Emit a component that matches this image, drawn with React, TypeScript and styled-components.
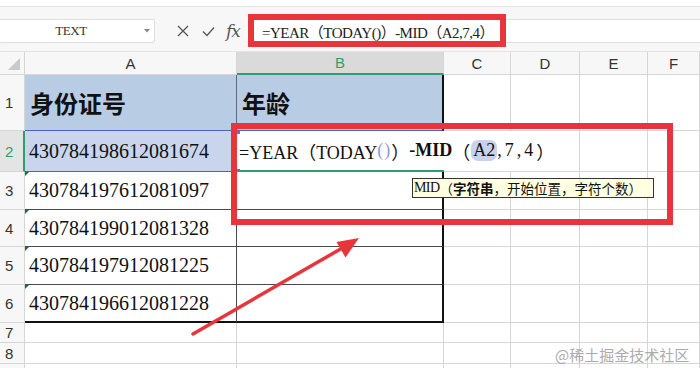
import React from "react";
import styled, { createGlobalStyle, css } from "styled-components";

const Global = createGlobalStyle`
  html, body { margin: 0; padding: 0; background: #fff; }
  body { width: 700px; height: 368px; overflow: hidden; }
  * { box-sizing: border-box; }
`;

const GREEN = "#2f9e6c";
const RED = "#e8353b";
const GRID = "#d6d6d6";
const DARK = "#4a4a4a";
const SERIF = `"Liberation Serif", "Noto Sans CJK SC", serif`;
const SANS = `"Liberation Sans", Arial, sans-serif`;
const CJK = `"Noto Sans CJK SC", "Liberation Sans", sans-serif`;

const Root = styled.div`
  position: relative;
  width: 700px;
  height: 368px;
  overflow: hidden;
  background: #fff;
`;

const TopStrip = styled.div`
  height: 7px;
  background: #fff;
  border-bottom: 1px solid #e4e4e4;
`;

const Toolbar = styled.div`
  height: 45px;
  display: flex;
  align-items: flex-start;
  padding-top: 12px;
  background: #f7f7f7;
  border-bottom: 1px solid #e2e2e2;
`;

const NameBox = styled.div`
  width: 156px;
  height: 24px;
  margin-left: -1px;
  display: flex;
  align-items: center;
  background: #fff;
  border: 1px solid #dedede;
  border-radius: 2px;
  font-family: ${SERIF};
  font-size: 13px;
  letter-spacing: -0.4px;
  color: #333;
`;

const NameText = styled.span`
  flex: 1;
  text-align: center;
  padding-left: 2px;
`;

const Caret = styled.span`
  width: 14px;
  display: flex;
  justify-content: center;
`;

const IconGroup = styled.div`
  width: 92px;
  height: 24px;
  display: flex;
  align-items: center;
  padding-left: 22px;
  gap: 13px;
  color: #555;
`;

const FxLabel = styled.span`
  font-family: "DejaVu Serif", "Liberation Serif", serif;
  font-style: italic;
  font-size: 17px;
  color: #555;
  letter-spacing: -1px;
  margin-left: -2px;
`;

const FormulaInput = styled.div`
  flex: 1;
  height: 24px;
  display: flex;
  align-items: center;
  padding-left: 15px;
  background: #fff;
  border-top: 1px solid #e0e0e0;
  border-bottom: 1px solid #e0e0e0;
  font-family: ${SERIF};
  font-size: 15px;
  letter-spacing: -0.5px;
  color: #222;
  white-space: nowrap;
`;

const Sheet = styled.div`
  display: grid;
  grid-template-columns: 25px 212px 207px 67px 69px 68px 52px;
  grid-template-rows: 23px 56px 41px 38px 37px 38px 38px 20px 21px 20px;
`;

const Corner = styled.div`
  background: #f7f7f7;
  border-right: 1px solid ${GRID};
  border-bottom: 1px solid ${GRID};
  display: flex;
  align-items: flex-end;
  justify-content: flex-end;
  padding: 0 4px 4px 0;
`;

const ColHead = styled.div<{ $active?: boolean }>`
  display: flex;
  align-items: center;
  justify-content: center;
  font-family: ${SANS};
  font-size: 15px;
  color: #333;
  background: #f7f7f7;
  border-right: 1px solid ${GRID};
  border-bottom: 1px solid ${GRID};
  ${(p) =>
    p.$active &&
    css`
      background: #dadada;
      color: ${GREEN};
      border-bottom: 2px solid ${GREEN};
    `}
`;

const RowHead = styled.div<{ $active?: boolean }>`
  display: flex;
  align-items: center;
  padding-left: 5px;
  font-family: ${SANS};
  font-size: 15px;
  color: #333;
  background: #f7f7f7;
  border-right: 1px solid ${GRID};
  border-bottom: 1px solid ${GRID};
  ${(p) =>
    p.$active &&
    css`
      background: #e4e4e4;
      color: ${GREEN};
      border-right: 2px solid ${GREEN};
    `}
`;

const HeadCell = styled.div<{ $last?: boolean }>`
  display: flex;
  align-items: center;
  padding-left: 5px;
  background: #b8cce4;
  font-family: ${CJK};
  font-weight: 700;
  font-size: 24px;
  color: #111;
  border-right: ${(p) => (p.$last ? "2px solid #111" : "1px solid #5d6a80")};
  border-bottom: 1px solid #4b62c4;
`;

const IdCell = styled.div<{ $flag?: boolean; $selected?: boolean; $lastRow?: boolean }>`
  position: relative;
  display: flex;
  align-items: center;
  padding-left: 4px;
  font-family: ${SERIF};
  font-size: 20px;
  color: #111;
  border-right: 1px solid ${DARK};
  border-bottom: ${(p) => (p.$lastRow ? "2px solid #111" : `1px solid ${DARK}`)};
  ${(p) =>
    p.$flag &&
    css`
      &::before {
        content: "";
        position: absolute;
        left: 0;
        top: 0;
        border-top: 4px solid #1e6b3c;
        border-right: 4px solid transparent;
      }
    `}
  ${(p) =>
    p.$selected &&
    css`
      background: #c8d5ec;
      border-right: 1px solid #4b62c4;
      border-bottom: 1px solid #4b62c4;
    `}
`;

const EditCell = styled.div`
  position: relative;
  z-index: 2;
  display: flex;
  align-items: center;
  padding-left: 2px;
  background: #fff;
  border-bottom: 2px solid ${GREEN};
  white-space: nowrap;
  font-family: ${SERIF};
  font-size: 18px;
  color: #111;
  &::before,
  &::after {
    content: "";
    position: absolute;
    left: 0;
    width: 3px;
    height: 3px;
    background: #6a6ed0;
  }
  &::before { top: 0; }
  &::after { bottom: -2px; }
`;

const Overflow = styled.span`
  display: inline-flex;
  align-items: center;
`;

const Dim = styled.span`
  color: #9597d6;
  letter-spacing: 1px;
`;

const Strong = styled.span`
  font-weight: 700;
`;

const Spread = styled.span`
  letter-spacing: 3px;
`;

const RefChip = styled.span`
  background: #c9d1ec;
  border-radius: 7px;
  padding: 0 2px;
  margin-left: 1px;
`;

const AgeCell = styled.div<{ $lastRow?: boolean }>`
  border-right: 2px solid #111;
  border-bottom: ${(p) => (p.$lastRow ? "2px solid #111" : `1px solid ${DARK}`)};
`;

const Blank = styled.div<{ $noRight?: boolean }>`
  border-right: ${(p) => (p.$noRight ? "none" : `1px solid ${GRID}`)};
  border-bottom: 1px solid ${GRID};
`;

const RedBox = styled.div<{ $x: number; $y: number; $w: number; $h: number }>`
  position: absolute;
  left: ${(p) => p.$x}px;
  top: ${(p) => p.$y}px;
  width: ${(p) => p.$w}px;
  height: ${(p) => p.$h}px;
  border: 6px solid ${RED};
  z-index: 5;
  pointer-events: none;
`;

const Tooltip = styled.div`
  position: absolute;
  left: 412px;
  top: 178px;
  width: 242px;
  height: 20px;
  display: flex;
  align-items: center;
  padding-left: 1px;
  background: #ffffe1;
  border: 1px solid #333;
  font-family: ${SERIF};
  font-size: 14px;
  letter-spacing: -0.6px;
  color: #111;
  white-space: nowrap;
  z-index: 6;
`;

const TipCjk = styled.span<{ $bold?: boolean }>`
  font-family: ${CJK};
  font-size: 13.5px;
  letter-spacing: 0;
  font-weight: ${(p) => (p.$bold ? 700 : 400)};
`;

const ArrowLayer = styled.svg`
  position: absolute;
  left: 0;
  top: 0;
  z-index: 7;
  pointer-events: none;
`;

const Watermark = styled.div`
  position: absolute;
  left: 555px;
  top: 344px;
  font-family: ${CJK};
  font-size: 15px;
  color: #9d9d9d;
  opacity: 0.85;
  z-index: 8;
`;

const ids = [
  "430784197612081097",
  "430784199012081328",
  "430784197912081225",
  "430784196612081228",
];

const cols = ["A", "B", "C", "D", "E", "F"];

const Blanks: React.FC<{ noRightFirst?: boolean }> = ({ noRightFirst }) => (
  <>
    <Blank $noRight={noRightFirst} />
    <Blank />
    <Blank />
    <Blank />
  </>
);

export default function App() {
  return (
    <Root>
      <Global />
      <TopStrip />
      <Toolbar>
        <NameBox>
          <NameText>TEXT</NameText>
          <Caret>
            <svg width="6" height="4" viewBox="0 0 6 4">
              <path d="M0 0 L6 0 L3 3.5 Z" fill="#888" />
            </svg>
          </Caret>
        </NameBox>
        <IconGroup>
          <svg width="12" height="12" viewBox="0 0 12 12">
            <path d="M1 1 L11 11 M11 1 L1 11" stroke="#555" strokeWidth="1.3" fill="none" />
          </svg>
          <svg width="13" height="11" viewBox="0 0 13 11">
            <path d="M1 5.5 L5 9.5 L12 1.5" stroke="#555" strokeWidth="1.3" fill="none" />
          </svg>
          <FxLabel>fx</FxLabel>
        </IconGroup>
        <FormulaInput>=YEAR（TODAY()）-MID（A2,7,4）</FormulaInput>
      </Toolbar>

      <Sheet>
        <Corner>
          <svg width="12" height="12" viewBox="0 0 12 12">
            <path d="M12 0 L12 12 L0 12 Z" fill="#c9c9c9" />
          </svg>
        </Corner>
        {cols.map((c) => (
          <ColHead key={c} $active={c === "B"}>
            {c}
          </ColHead>
        ))}

        <RowHead>1</RowHead>
        <HeadCell>身份证号</HeadCell>
        <HeadCell $last>年龄</HeadCell>
        <Blanks />

        <RowHead $active>2</RowHead>
        <IdCell $selected>430784198612081674</IdCell>
        <EditCell>
          <Overflow>
            =YEAR（TODAY<Dim>()</Dim>）<Strong>-MID</Strong>（<RefChip>A2</RefChip>
            <Spread>,7,4</Spread>）
          </Overflow>
        </EditCell>
        <Blanks noRightFirst />

        {ids.map((id, i) => (
          <React.Fragment key={id}>
            <RowHead>{i + 3}</RowHead>
            <IdCell $flag $lastRow={i === ids.length - 1}>
              {id}
            </IdCell>
            <AgeCell $lastRow={i === ids.length - 1} />
            <Blanks />
          </React.Fragment>
        ))}

        {[7, 8, 9].map((n) => (
          <React.Fragment key={n}>
            <RowHead>{n < 9 ? n : ""}</RowHead>
            <Blank />
            <Blank />
            <Blanks />
          </React.Fragment>
        ))}
      </Sheet>

      <RedBox $x={248} $y={14} $w={258} $h={33} />
      <RedBox $x={231} $y={123} $w={442} $h={102} />

      <Tooltip>
        MID<TipCjk>（</TipCjk>
        <TipCjk $bold>字符串</TipCjk>
        <TipCjk>，开始位置，字符个数）</TipCjk>
      </Tooltip>

      <ArrowLayer width="700" height="368" viewBox="0 0 700 368">
        <line x1="193" y1="334" x2="344" y2="247" stroke={RED} strokeWidth="3.5" strokeLinecap="round" />
        <polygon points="359,238 336.5,242 345.5,257.5" fill={RED} />
      </ArrowLayer>

      <Watermark>@稀土掘金技术社区</Watermark>
    </Root>
  );
}
